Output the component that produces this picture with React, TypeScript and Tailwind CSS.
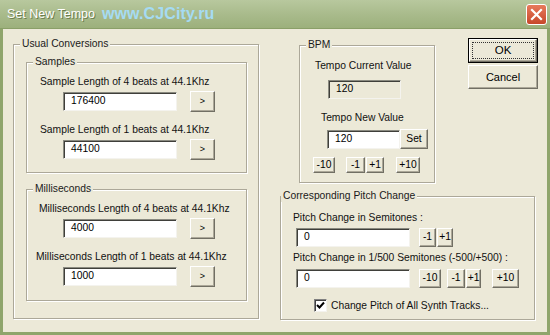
import type { ReactNode } from 'react';

function Btn({ children, className = '' }: { children?: ReactNode; className?: string }) {
  return (
    <div
      className={`flex items-center justify-center bg-[#ECE9D8] border border-t-white border-l-white border-r-[#716f64] border-b-[#716f64] shadow-[inset_-1px_-1px_0_#aca899] text-black leading-none ${className}`}
    >
      {children}
    </div>
  );
}

function Field({ value, className = '', readOnly = false }: { value: string; className?: string; readOnly?: boolean }) {
  return (
    <div
      className={`flex items-center border border-t-[#8a8a80] border-l-[#8a8a80] border-b-[#f4f3ee] border-r-[#f4f3ee] shadow-[inset_1px_1px_0_#3f3f3a] pl-[7px] leading-none text-black ${readOnly ? 'bg-[#ECE9D8]' : 'bg-white'} ${className}`}
    >
      {value}
    </div>
  );
}

function Group({
  title,
  className = '',
  titleClass = 'left-[6px]',
  children,
}: {
  title: string;
  className?: string;
  titleClass?: string;
  children?: ReactNode;
}) {
  return (
    <div className={`relative border border-[#aca899] shadow-[1px_1px_0_#fff,inset_1px_1px_0_#fff] ${className}`}>
      <span className={`absolute top-[-7px] bg-[#ECE9D8] px-[2px] leading-[12px] text-[#1a1a1a] ${titleClass}`}>{title}</span>
      {children}
    </div>
  );
}

function ConvRow({ label, value, labelPad, first }: { label: string; value: string; labelPad: string; first?: boolean }) {
  return (
    <>
      <div className={`h-[14px] leading-[14px] ${labelPad} ${first ? '' : 'mt-[12px]'}`}>{label}</div>
      <div className="flex items-center h-[20px] mt-[2px]">
        <Field value={value} className="ml-[36px] w-[114px] h-[19px]" />
        <Btn className="ml-[13px] w-[25px] h-[21px] text-[9px] text-[#333]">&gt;</Btn>
      </div>
    </>
  );
}

export default function App() {
  return (
    <div className="w-[550px] h-[335px] flex flex-col bg-[#8fa56c] font-['Liberation_Sans',Arial,sans-serif] text-[10.3px] text-[#111] overflow-hidden">
      {/* Title bar */}
      <div className="h-[29px] flex items-center bg-gradient-to-b from-[#b8c89e] via-[#a9bb8c] to-[#9cb07c] border-b border-[#8a9f68]">
        <span className="ml-[7px] text-[12.5px] text-white [text-shadow:1px_1px_0_#6b7d4e]">Set New Tempo</span>
        <span className="ml-[7px] text-[16px] font-bold text-[#a5dbf3] tracking-[0.1px]">www.CJCity.ru</span>
        <div className="ml-auto mr-[3px] w-[21px] h-[21px] rounded-[3px] border border-white bg-gradient-to-b from-[#e77a5b] to-[#c7472a] flex items-center justify-center">
          <svg width="13" height="13" viewBox="0 0 13 13">
            <path d="M2 2 L11 11 M11 2 L2 11" stroke="white" strokeWidth="2.2" strokeLinecap="square" />
          </svg>
        </div>
      </div>

      {/* Body */}
      <div className="flex-1 mx-[3px] mb-[3px] bg-[#ECE9D8] flex pl-[10px] pt-[9px]">
        {/* Left: Usual Conversions */}
        <Group title="Usual Conversions" className="mt-[6px] w-[246px] h-[275px] pl-[12px] pt-[17px]">
          <Group title="Samples" className="w-[221px] h-[111px] pt-[12px]">
            <ConvRow first label="Sample Length of 4 beats at 44.1Khz" value="176400" labelPad="pl-[13px]" />
            <ConvRow label="Sample Length of 1 beats at 44.1Khz" value="44100" labelPad="pl-[13px]" />
          </Group>
          <Group title="Milliseconds" className="mt-[16px] w-[221px] h-[112px] pt-[12px]">
            <ConvRow first label="Milliseconds Length of 4 beats at 44.1Khz" value="4000" labelPad="pl-[12px]" />
            <ConvRow label="Milliseconds Length of 1 beats at 44.1Khz" value="1000" labelPad="pl-[9px]" />
          </Group>
        </Group>

        {/* Right side */}
        <div className="ml-[21px] flex flex-col">
          <div className="flex items-start">
            <Group title="BPM" className="ml-[19px] mt-[7px] w-[136px] h-[138px] pt-[13px] flex flex-col items-start">
              <div className="ml-[15px] h-[14px] leading-[14px]">Tempo Current Value</div>
              <Field readOnly value="120" className="ml-[28px] mt-[7px] w-[73px] h-[19px]" />
              <div className="ml-[21px] mt-[12px] h-[14px] leading-[14px]">Tempo New Value</div>
              <div className="ml-[27px] mt-[4px] flex items-center">
                <Field value="120" className="w-[73px] h-[19px]" />
                <Btn className="w-[28px] h-[20px]">Set</Btn>
              </div>
              <div className="ml-[13px] mt-[8px] flex items-center h-[16px]">
                <Btn className="w-[22px] h-[16px]">-10</Btn>
                <Btn className="ml-[11px] w-[19px] h-[16px]">-1</Btn>
                <Btn className="ml-[1px] w-[18px] h-[16px]">+1</Btn>
                <Btn className="ml-[12px] w-[24px] h-[16px]">+10</Btn>
              </div>
            </Group>

            <div className="ml-[33px] flex flex-col">
              <div className="w-[70px] h-[25px] border border-black">
                <Btn className="w-full h-full">
                  <span className="w-[62px] h-[17px] flex items-center justify-center border border-dotted border-[#333] text-[11.5px]">OK</span>
                </Btn>
              </div>
              <Btn className="mt-[2px] w-[70px] h-[24px] text-[11px]">Cancel</Btn>
            </div>
          </div>

          <Group
            title="Corresponding Pitch Change"
            titleClass="left-[0px]"
            className="mt-[13px] w-[255px] h-[124px] pt-[14px]"
          >
            <div className="ml-[12px] h-[14px] leading-[14px]">Pitch Change in Semitones :</div>
            <div className="mt-[3px] flex items-center">
              <Field value="0" className="ml-[15px] w-[114px] h-[19px]" />
              <Btn className="ml-[9px] w-[17px] h-[19px]">-1</Btn>
              <Btn className="ml-[1px] w-[16px] h-[19px]">+1</Btn>
            </div>
            <div className="ml-[12px] mt-[4px] h-[14px] leading-[14px]">Pitch Change in 1/500 Semitones (-500/+500) :</div>
            <div className="mt-[4px] flex items-center">
              <Field value="0" className="ml-[15px] w-[114px] h-[19px]" />
              <Btn className="ml-[9px] w-[22px] h-[19px]">-10</Btn>
              <Btn className="ml-[6px] w-[18px] h-[19px]">-1</Btn>
              <Btn className="ml-[1px] w-[15px] h-[19px]">+1</Btn>
              <Btn className="ml-[11px] w-[27px] h-[19px]">+10</Btn>
            </div>
            <div className="mt-[11px] ml-[33px] flex items-center">
              <div className="w-[13px] h-[13px] bg-white border border-t-[#808080] border-l-[#808080] border-b-[#f4f3ee] border-r-[#f4f3ee] shadow-[inset_1px_1px_0_#404040] flex items-center justify-center">
                <svg width="9" height="9" viewBox="0 0 9 9">
                  <path d="M1 4 L3.5 6.5 L8 1.5" stroke="black" strokeWidth="2" fill="none" />
                </svg>
              </div>
              <span className="ml-[4px] leading-[13px]">Change Pitch of All Synth Tracks...</span>
            </div>
          </Group>
        </div>
      </div>
    </div>
  );
}
